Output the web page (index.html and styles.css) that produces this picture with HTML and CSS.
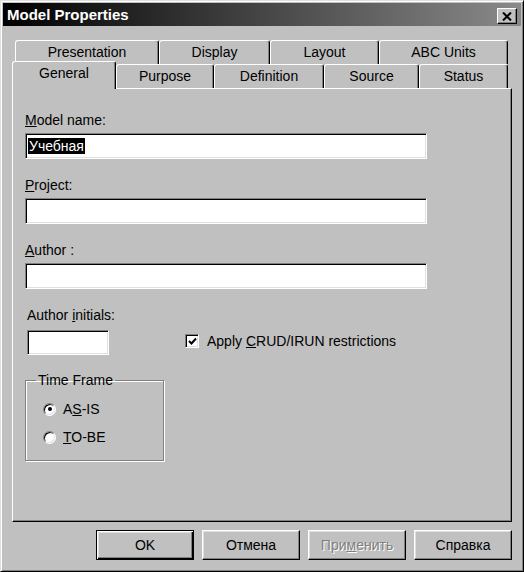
FILE: index.html
```html
<!DOCTYPE html>
<html lang="en">
  <head>
    <meta charset="UTF-8" />
    <meta name="viewport" content="width=device-width, initial-scale=1.0" />
    <link rel="stylesheet" href="styles.css">
    <title>Model Properties</title>
  </head>
  <body>
    <div class="window">
      <div class="titlebar">
        <span class="title">Model Properties</span>
        <span class="close-btn">
          <svg width="10" height="9" viewBox="0 0 10 9">
            <path d="M1 0.5 L9 8.5 M9 0.5 L1 8.5" stroke="#000" stroke-width="2" fill="none" />
          </svg>
        </span>
      </div>

      <!-- Tabs -->
      <div class="tabs">
        <div class="tab-row back-row">
          <div class="tab">Presentation</div>
          <div class="tab">Display</div>
          <div class="tab">Layout</div>
          <div class="tab">ABC Units</div>
        </div>
        <div class="tab-row front-row">
          <div class="tab active">General</div>
          <div class="tab">Purpose</div>
          <div class="tab">Definition</div>
          <div class="tab">Source</div>
          <div class="tab">Status</div>
        </div>
      </div>

      <div class="panel">
        <div class="field">
          <label><u>M</u>odel name:</label>
          <div class="textbox"><span class="selection">Учебная</span></div>
        </div>
        <div class="field">
          <label><u>P</u>roject:</label>
          <div class="textbox"></div>
        </div>
        <div class="field">
          <label><u>A</u>uthor :</label>
          <div class="textbox"></div>
        </div>

        <div class="initials-row">
          <div class="initials">
            <label>Author <u>i</u>nitials:</label>
            <div class="textbox small"></div>
          </div>
          <div class="check-line">
            <span class="checkbox">
              <svg width="9" height="9" viewBox="0 0 9 9">
                <path d="M1 4 L3.5 6.5 L8 1.5" stroke="#000" stroke-width="2" fill="none" />
              </svg>
            </span>
            <span>Apply <u>C</u>RUD/IRUN restrictions</span>
          </div>
        </div>

        <fieldset class="timeframe">
          <legend>Time Frame</legend>
          <div class="radio-line">
            <span class="radio checked"></span>
            <span>A<u>S</u>-IS</span>
          </div>
          <div class="radio-line">
            <span class="radio"></span>
            <span><u>T</u>O-BE</span>
          </div>
        </fieldset>
      </div>

      <div class="buttons">
        <div class="btn default">OK</div>
        <div class="btn">Отмена</div>
        <div class="btn disabled">При<u>м</u>енить</div>
        <div class="btn">Справка</div>
      </div>
    </div>
  </body>
</html>
```

FILE: styles.css
```css
body {
  margin: 0;
  background-color: #c0c0c0;
  font-family: "Liberation Sans", Arial, sans-serif;
  font-size: 14px;
  color: #000;
}

.window {
  box-sizing: border-box;
  width: 524px;
  height: 572px;
  background-color: #c0c0c0;
  border: 1px solid;
  border-color: #dfdfdf #000 #000 #dfdfdf;
  box-shadow: inset 1px 1px #fff, inset -1px -1px #808080;
  padding: 2px;
  display: flex;
  flex-direction: column;
}

.titlebar {
  height: 23px;
  display: flex;
  align-items: center;
  justify-content: space-between;
  background: linear-gradient(to right, #000 0%, #2a2a2a 30%, #8a8a8a 100%);
  padding-left: 4px;
}

.title {
  color: #fff;
  font-weight: bold;
  font-size: 15px;
}

.close-btn {
  box-sizing: border-box;
  width: 20px;
  height: 16px;
  margin-right: 4px;
  margin-top: 3px;
  background-color: #c0c0c0;
  border: 1px solid;
  border-color: #fff #000 #000 #fff;
  box-shadow: inset -1px -1px #808080;
  display: flex;
  align-items: center;
  justify-content: center;
}

/* Tabs */
.tabs {
  margin-top: 14px;
  margin-left: 9px;
}

.tab-row {
  display: grid;
  grid-template-rows: 24px;
}

.back-row {
  padding-left: 3px;
  grid-template-columns: 144px 111px 109px 129px;
}

.front-row {
  grid-template-columns: 104px 98px 110px 95px 89px;
}

.tab {
  box-sizing: border-box;
  height: 24px;
  padding-top: 3px;
  line-height: 16px;
  text-align: center;
  background-color: #c0c0c0;
  border-top: 1px solid #fff;
  border-left: 1px solid #fff;
  border-right: 1px solid #000;
  box-shadow: inset -1px 0 #808080;
  border-radius: 3px 3px 0 0;
}

.tab.active {
  height: 28px;
  align-self: end;
  margin-top: -3px;
  margin-bottom: -1px;
  position: relative;
  z-index: 1;
}

.panel {
  box-sizing: border-box;
  width: 500px;
  height: 434px;
  margin-left: 9px;
  border: 1px solid;
  border-color: #fff #000 #000 #fff;
  box-shadow: inset -1px -1px #808080;
  padding: 23px 12px 0 12px;
}

label {
  display: block;
  line-height: 16px;
}

.field {
  margin-bottom: 18px;
}

.field label {
  margin-bottom: 5px;
}

.field + .field {
  margin-top: 1px;
}

.textbox {
  box-sizing: border-box;
  width: 402px;
  height: 26px;
  background-color: #fff;
  border: 1px solid;
  border-color: #808080 #fff #fff #808080;
  box-shadow: inset 1px 1px #000, inset -1px -1px #dfdfdf;
  padding: 4px 0 0 2px;
  line-height: 16px;
}

.textbox.small {
  width: 82px;
  height: 25px;
}

.selection {
  background-color: #000;
  color: #fff;
  padding: 0 1px;
}

.initials-row {
  display: flex;
  align-items: flex-end;
  margin-top: 1px;
  margin-left: 2px;
}

.initials {
  width: 158px;
}

.initials label {
  margin-bottom: 7px;
}

.check-line {
  display: flex;
  align-items: center;
  gap: 8px;
  line-height: 16px;
  margin-bottom: 6px;
}

.checkbox {
  box-sizing: border-box;
  width: 14px;
  height: 14px;
  background-color: #fff;
  border: 1px solid;
  border-color: #808080 #fff #fff #808080;
  box-shadow: inset 1px 1px #000, inset -1px -1px #dfdfdf;
  display: flex;
  align-items: center;
  justify-content: center;
}

.timeframe {
  box-sizing: border-box;
  width: 139px;
  margin: 17px 0 0 0;
  padding: 13px 10px 15px 10px;
  border: 1px solid #808080;
  box-shadow: 1px 1px 0 #fff, inset 1px 1px 0 #fff;
}

.timeframe legend {
  padding: 0 2px;
  line-height: 16px;
}

.radio-line {
  display: flex;
  align-items: center;
  gap: 7px;
  line-height: 16px;
  margin-left: 7px;
}

.radio-line + .radio-line {
  margin-top: 12px;
}

.radio {
  box-sizing: border-box;
  width: 13px;
  height: 13px;
  border-radius: 50%;
  background-color: #fff;
  border: 1px solid;
  border-color: #808080 #fff #fff #808080;
  box-shadow: inset 1px 1px #000, inset -1px -1px #dfdfdf;
  display: flex;
  align-items: center;
  justify-content: center;
}

.radio.checked::after {
  content: "";
  width: 4px;
  height: 4px;
  border-radius: 50%;
  background-color: #000;
}

/* Buttons */
.buttons {
  display: flex;
  justify-content: flex-end;
  gap: 8px;
  margin-top: 8px;
  padding-right: 9px;
}

.btn {
  box-sizing: border-box;
  width: 98px;
  height: 30px;
  line-height: 28px;
  text-align: center;
  border: 1px solid;
  border-color: #fff #000 #000 #fff;
  box-shadow: inset -1px -1px #808080, inset 1px 1px #dfdfdf;
}

.btn.default {
  border-color: #000;
  box-shadow: inset 1px 1px #fff, inset -1px -1px #000, inset -2px -2px #808080, inset 2px 2px #dfdfdf;
}

.btn.disabled {
  color: #808080;
  text-shadow: 1px 1px #fff;
}
```
